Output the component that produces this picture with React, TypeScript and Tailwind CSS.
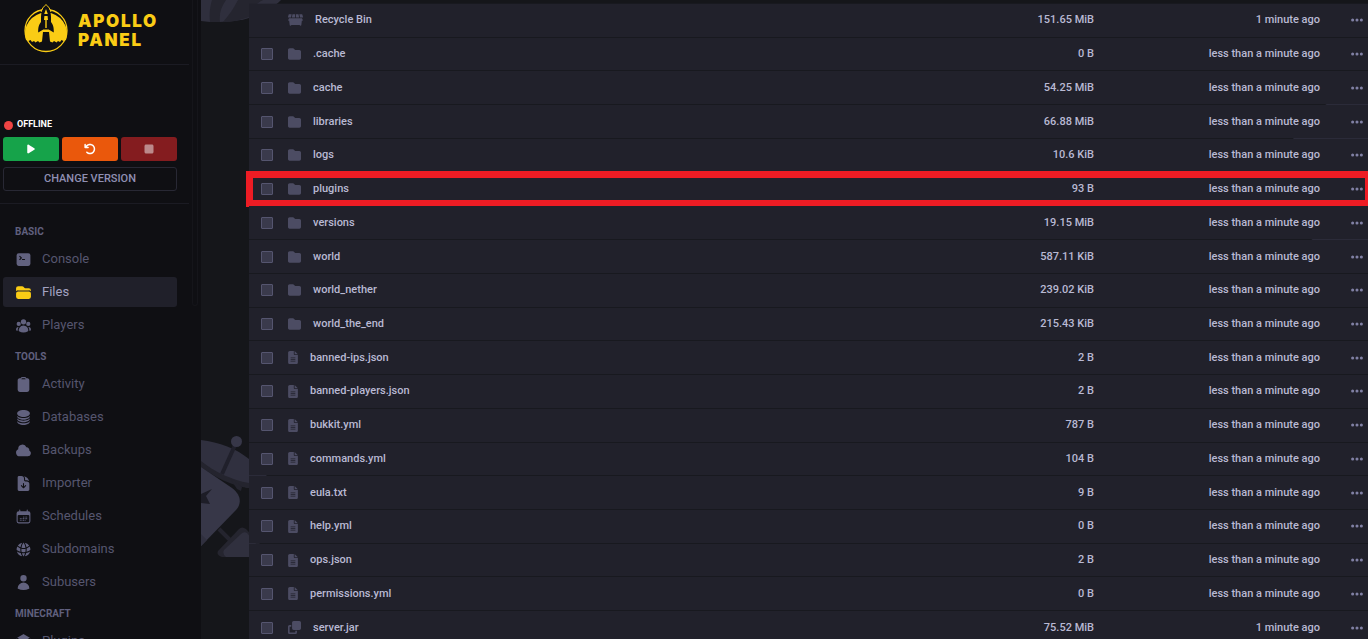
import type { IconType } from 'react-icons';
import { FaArrowRotateLeft, FaClone, FaDumpster, FaEllipsis, FaFileLines, FaFolder, FaPlay, FaStop } from 'react-icons/fa6';
import {
    HiCalendarDays,
    HiCircleStack,
    HiClipboard,
    HiCloud,
    HiCommandLine,
    HiCube,
    HiDocumentArrowDown,
    HiFolder,
    HiGlobeAlt,
    HiUser,
    HiUserGroup,
} from 'react-icons/hi2';

type NavItem = { label: string; icon: IconType; active?: boolean };
type FileKind = 'bin' | 'folder' | 'file' | 'archive';
type FileEntry = { name: string; kind: FileKind; size: string; modified?: string; highlighted?: boolean };

const navigation: { title: string; items: NavItem[] }[] = [
    {
        title: 'BASIC',
        items: [
            { label: 'Console', icon: HiCommandLine },
            { label: 'Files', icon: HiFolder, active: true },
            { label: 'Players', icon: HiUserGroup },
        ],
    },
    {
        title: 'TOOLS',
        items: [
            { label: 'Activity', icon: HiClipboard },
            { label: 'Databases', icon: HiCircleStack },
            { label: 'Backups', icon: HiCloud },
            { label: 'Importer', icon: HiDocumentArrowDown },
            { label: 'Schedules', icon: HiCalendarDays },
            { label: 'Subdomains', icon: HiGlobeAlt },
            { label: 'Subusers', icon: HiUser },
        ],
    },
    {
        title: 'MINECRAFT',
        items: [{ label: 'Plugins', icon: HiCube }],
    },
];

const files: FileEntry[] = [
    { name: 'Recycle Bin', kind: 'bin', size: '151.65 MiB', modified: '1 minute ago' },
    { name: '.cache', kind: 'folder', size: '0 B' },
    { name: 'cache', kind: 'folder', size: '54.25 MiB' },
    { name: 'libraries', kind: 'folder', size: '66.88 MiB' },
    { name: 'logs', kind: 'folder', size: '10.6 KiB' },
    { name: 'plugins', kind: 'folder', size: '93 B', highlighted: true },
    { name: 'versions', kind: 'folder', size: '19.15 MiB' },
    { name: 'world', kind: 'folder', size: '587.11 KiB' },
    { name: 'world_nether', kind: 'folder', size: '239.02 KiB' },
    { name: 'world_the_end', kind: 'folder', size: '215.43 KiB' },
    { name: 'banned-ips.json', kind: 'file', size: '2 B' },
    { name: 'banned-players.json', kind: 'file', size: '2 B' },
    { name: 'bukkit.yml', kind: 'file', size: '787 B' },
    { name: 'commands.yml', kind: 'file', size: '104 B' },
    { name: 'eula.txt', kind: 'file', size: '9 B' },
    { name: 'help.yml', kind: 'file', size: '0 B' },
    { name: 'ops.json', kind: 'file', size: '2 B' },
    { name: 'permissions.yml', kind: 'file', size: '0 B' },
    { name: 'server.jar', kind: 'archive', size: '75.52 MiB', modified: '1 minute ago' },
];

const fileIcons: Record<FileKind, { icon: IconType; className: string }> = {
    bin: { icon: FaDumpster, className: 'h-[14px] w-[15px]' },
    folder: { icon: FaFolder, className: 'h-[14px] w-[13px]' },
    file: { icon: FaFileLines, className: 'h-[13px] w-[10px]' },
    archive: { icon: FaClone, className: 'h-[13px] w-[13px]' },
};

function Logo() {
    return (
        <a href="#" className="flex h-16 items-start gap-[10px] pt-1 pl-6 text-[#facc15]">
            <svg viewBox="0 0 44 49" className="h-[49px] w-11" aria-hidden="true">
                <circle cx="22" cy="26.5" r="21" fill="#0f0f13" stroke="currentColor" strokeWidth="1.3" />
                <path
                    d="M2 36 A21 21 0 1 1 42 36 L39.5 37 37.5 36 36 38 34 37 32.5 38.5 30 37 28.5 38.5 26 37.5 25 28 H19 L18 37.5 15.5 38.5 14 37 11.5 38.5 10 37 8 38 6.5 36 4.5 37Z"
                    fill="currentColor"
                />
                <path
                    d="M22 0.6 C18.5 4 17 8.5 17 13 L17 18 C15 20.5 14 23 14.2 28.5 L19.3 25.5 H24.7 L29.8 28.5 C30 23 29 20.5 27 18 L27 13 C27 8.5 25.5 4 22 0.6Z"
                    fill="#0f0f13"
                />
                <path
                    d="M17 8 C17.8 5 19.6 2.5 22 0.6 C24.4 2.5 26.2 5 27 8"
                    fill="none"
                    stroke="currentColor"
                    strokeWidth="1"
                />
                <path d="M22 5 L20.2 10 H23.8Z M20.4 12 H23.6 L24 16 H20Z M21.3 16 H22.7 V24 H21.3Z" fill="currentColor" />
            </svg>
            <span className="pt-2 font-['Inter',sans-serif] text-[17px] leading-[19px] font-black tracking-widest">
                APOLLO
                <br />
                PANEL
            </span>
        </a>
    );
}

function PowerControls() {
    return (
        <section className="mr-3 border-b border-[#1b1b23] pt-[52px] pr-3 pb-3 pl-[3px]">
            <p className="flex h-4 items-center gap-1 pl-px text-[9px] font-bold text-white">
                <span className="size-[9px] rounded-full bg-[#ef4444]" />
                OFFLINE
            </p>
            <div className="mt-1 grid grid-cols-3 gap-[3px]">
                <button aria-label="Start" className="flex h-6 items-center justify-center rounded-[3px] bg-[#16a34a] text-white">
                    <FaPlay className="size-[10px]" />
                </button>
                <button aria-label="Restart" className="flex h-6 items-center justify-center rounded-[3px] bg-[#ea580c] text-white">
                    <FaArrowRotateLeft className="size-3" />
                </button>
                <button aria-label="Stop" className="flex h-6 items-center justify-center rounded-[3px] bg-[#841c1f] text-[#bc898b]">
                    <FaStop className="size-3" />
                </button>
            </div>
            <button className="mt-[6px] h-6 w-full rounded-[3px] border border-[#282834] text-[11px] leading-4 font-medium text-[#8f8fb3]">
                CHANGE VERSION
            </button>
        </section>
    );
}

function Sidebar() {
    return (
        <aside className="relative w-[201px] shrink-0 overflow-hidden bg-[#0f0f13]">
            <div className="mr-3 border-b border-[#1b1b23]">
                <Logo />
            </div>
            <PowerControls />
            <nav className="flex flex-col gap-[9px] pt-5 pr-6 pl-[3px]">
                {navigation.map((group) => (
                    <div key={group.title}>
                        <h2 className="mb-1 pl-3 text-[10px] leading-4 font-bold text-[#60607e]">{group.title}</h2>
                        <ul className="flex flex-col gap-[3px]">
                            {group.items.map(({ label, icon: Icon, active }) => (
                                <li key={label}>
                                    <a
                                        href="#"
                                        className={
                                            active
                                                ? 'flex h-[30px] items-center gap-[10px] rounded-[3px] bg-[#20202a] pl-3 text-[13px] text-[#a3a3c2]'
                                                : 'flex h-[30px] items-center gap-[10px] rounded-[3px] pl-3 text-[13px] text-[#56566f]'
                                        }
                                    >
                                        <Icon className={active ? 'size-[17px] text-[#facc15]' : 'size-[17px] text-[#62627f]'} />
                                        {label}
                                    </a>
                                </li>
                            ))}
                        </ul>
                    </div>
                ))}
            </nav>
            {/* scrollbar thumb */}
            <span className="absolute top-0 right-[3px] h-[306px] w-[6px] rounded-b-sm border border-t-0 border-[#15151a]" />
        </aside>
    );
}

function Backdrop() {
    return (
        <>
            <svg viewBox="0 0 100 560" className="absolute top-0 left-0 h-[560px] w-[100px]" aria-hidden="true">
                <path d="M0 0 H80 C68 12 48 22 18 22 C12 22 6 22 0 21Z" fill="#2f2f3d" />
                <path d="M11 0 H25 C20 7 18 14 19 22 H9 C8 14 9 7 11 0Z M37 0 H62 C54 4 50 10 48 17 C40 20 31 22 22 22 C28 15 33 8 37 0Z" fill="#25252f" />
                <path d="M0 440 C18 442 36 449 48 459 L66 476 L60 490 C50 488 46 488 40 486 C24 480 12 471 0 462Z" fill="#30303f" />
                <path d="M0 461 C14 472 30 480 48 483 V488 C30 486 14 477 0 467Z" fill="#24242e" />
                <path d="M28 477 L41 487 40 491 36 489Z" fill="#24242e" />
                <path d="M0 467 L31 488 C40 495 41 503 35 510 L0 546Z" fill="#373748" />
                <path d="M0 534 L6 540 0 546Z" fill="#30303f" />
                <path d="M0 494 L11 489 5 496 9 504 0 503Z" fill="#1d1d27" />
                <path d="M35 443 L21 474" stroke="#20202b" strokeWidth="4" />
                <circle cx="35.5" cy="441.5" r="5.5" fill="#373748" />
                <path d="M18 529 L29 540" stroke="#24242e" strokeWidth="4" />
                <path d="M17 551 L38 529 Q41 526 45 529 L60 545 52 557 H21 Q15 555 17 551Z" fill="#25252f" />
                <path d="M23 550 L40 534 Q43 531 46 533 L56 545 50 557 H25 Q21 554 23 550Z" fill="#30303e" />
            </svg>
            <svg viewBox="0 0 84 168" className="absolute top-[93px] right-0 h-[168px] w-[84px]" aria-hidden="true">
                <circle cx="84" cy="84" r="84" fill="#30303f" />
            </svg>
        </>
    );
}

function FileRow({ name, kind, size, modified = 'less than a minute ago', highlighted }: FileEntry) {
    const { icon: Icon, className } = fileIcons[kind];

    return (
        <tr className="relative">
            <td className="bg-[#21212b] pl-3">
                {kind !== 'bin' && (
                    <input
                        type="checkbox"
                        aria-label={`Select ${name}`}
                        className="block size-3 appearance-none rounded-[1px] border border-[#55556f] bg-[#3a3a4c]"
                    />
                )}
                {highlighted && (
                    <span className="pointer-events-none absolute -inset-y-[2px] right-0 -left-[3px] border-[7px] border-r-[3px] border-[#ed1c24]" />
                )}
            </td>
            <td className="bg-[#21212b]">
                <a href="#" className="flex items-center gap-3">
                    <Icon className={`${className} text-[#4c4c63]`} />
                    {name}
                </a>
            </td>
            <td className="bg-[#21212b] text-right">{size}</td>
            <td className="bg-[#21212b] text-right">{modified}</td>
            <td className="bg-[#21212b]">
                <button aria-label={`Actions for ${name}`} className="ml-auto block pr-1 text-[#8080a4]">
                    <FaEllipsis className="size-[14px]" />
                </button>
            </td>
        </tr>
    );
}

export default function App() {
    return (
        <div className="flex h-screen overflow-hidden bg-[#15161a] font-['Roboto',sans-serif]">
            <Sidebar />
            <main className="relative min-w-0 flex-1 pt-[3px] pl-12">
                <Backdrop />
                <table className="relative h-[642px] w-full table-fixed border-separate border-spacing-x-0 border-spacing-y-px bg-[#21212b]/30 text-[11px] leading-4 font-medium text-[#b9b9d3]">
                    <colgroup>
                        <col className="w-[39px]" />
                        <col />
                        <col className="w-[120px]" />
                        <col className="w-[226px]" />
                        <col className="w-12" />
                    </colgroup>
                    <tbody>
                        {files.map((file) => (
                            <FileRow key={file.name} {...file} />
                        ))}
                    </tbody>
                </table>
            </main>
        </div>
    );
}
